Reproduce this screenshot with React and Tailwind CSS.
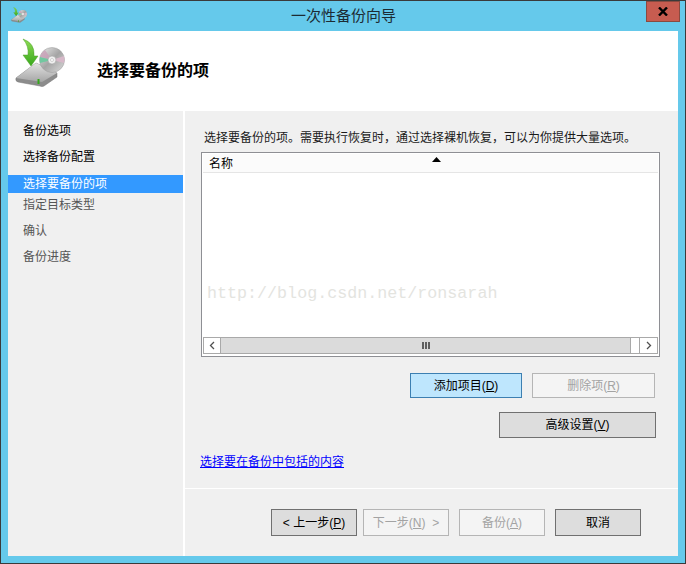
import React from 'react';

const FONT = "font-['Liberation_Sans','Noto_Sans_CJK_SC',sans-serif]";

const BackupIcon = ({ size }) => (
  <svg width={size} height={size} viewBox="0 0 56 56">
    <defs>
      <linearGradient id={`disc${size}`} x1="0" y1="0" x2="1" y2="1">
        <stop offset="0" stopColor="#ececec" />
        <stop offset="0.5" stopColor="#a4a4a4" />
        <stop offset="1" stopColor="#dcdcdc" />
      </linearGradient>
      <linearGradient id={`drive${size}`} x1="0" y1="0" x2="0" y2="1">
        <stop offset="0" stopColor="#e2e2e2" />
        <stop offset="1" stopColor="#a6a6a6" />
      </linearGradient>
      <linearGradient id={`arrow${size}`} x1="0" y1="0" x2="0" y2="1">
        <stop offset="0" stopColor="#8fdc55" />
        <stop offset="1" stopColor="#38a81c" />
      </linearGradient>
    </defs>
    {/* drive */}
    <path d="M4 40 L24 25 L45 35 L45 39 L32 48 Q30 49 28 48 L6 44 Q3 43 4 40Z" fill="#8c8c8c" stroke="#777" strokeWidth="0.5" />
    <path d="M4 40 L24 25 L45 35 L30 44Z" fill={`url(#drive${size})`} />
    <rect x="25.5" y="41" width="2" height="5" fill="#36a81c" />
    {/* disc */}
    <circle cx="40" cy="22" r="12.5" fill={`url(#disc${size})`} stroke="#999" strokeWidth="0.5" />
    <path d="M40 22 L28 19 A12 12 0 0 1 33 12Z" fill="#c9a0b8" opacity="0.8" />
    <path d="M40 22 L28 25 A12 12 0 0 1 28 19Z" fill="#72c8a0" />
    <path d="M40 22 L52 25 A12 12 0 0 0 52 18Z" fill="#d6b8c8" />
    <circle cx="40" cy="22" r="4" fill="#efefef" stroke="#999" strokeWidth="0.5" />
    <circle cx="40" cy="22" r="1.5" fill="#fff" stroke="#aaa" strokeWidth="0.5" />
    {/* arrow */}
    <path d="M11 1 Q23 5 22 18 L26 18 L19 28 L11 17 L16 17 Q17 8 11 1Z" fill={`url(#arrow${size})`} stroke="#4d9e2a" strokeWidth="0.5" />
  </svg>
);

const ScrollArrow = ({ d }) => (
  <svg width="7" height="9" viewBox="0 0 7 9" fill="none" stroke="#505050" strokeWidth="1.3">
    <path d={d} />
  </svg>
);

const Button = ({ children, className = '', disabled }) => (
  <div
    className={`flex items-center justify-center border text-[12px] ${
      disabled ? 'border-[#b5b5b5] bg-[#f4f4f4] text-[#a3a3a3]' : 'border-[#707070] bg-[#dddddd] text-black'
    } ${className}`}
  >
    {children}
  </div>
);

const steps = [
  { label: '备份选项', cls: 'h-[26px] text-black' },
  { label: '选择备份配置', cls: 'mb-[5px] h-[26px] text-black' },
  { label: '选择要备份的项', cls: 'h-[18px] bg-[#3399ff] text-white' },
  { label: '指定目标类型', cls: 'mb-[1px] h-[24px] text-[#555555]' },
  { label: '确认', cls: 'h-[26px] text-[#555555]' },
  { label: '备份进度', cls: 'h-[26px] text-[#555555]' },
];

export default function App() {
  return (
    <div className={`${FONT} flex h-[564px] w-[686px] flex-col border border-[#3a3a3a] bg-[#65c9eb]`}>
      {/* Title bar */}
      <div className="flex h-[30px] shrink-0 items-start">
        <div className="ml-[9px] mt-[6px] w-[18px]">
          <BackupIcon size={18} />
        </div>
        <div className="mt-[3px] flex-1 pl-[13px] text-center text-[15px] leading-[24px] text-[#1c2b33]">一次性备份向导</div>
        <div className="mr-[5px] flex h-[21px] w-[34px] items-center justify-center border border-[#8a4a40] bg-[#c75c50]">
          <svg width="10" height="9" viewBox="0 0 10 9" stroke="#000" strokeWidth="2.4">
            <path d="M1 0.5 L9 8.5 M9 0.5 L1 8.5" />
          </svg>
        </div>
      </div>

      <div className="mx-[7px] flex h-[525px] w-[670px] flex-col bg-white">
        {/* Header */}
        <div className="flex h-[80px] shrink-0 items-start">
          <div className="ml-[4px] mt-[7px]">
            <BackupIcon size={56} />
          </div>
          <div className="ml-[29px] mt-[28px] text-[16px] font-bold leading-[24px] text-black">选择要备份的项</div>
        </div>

        <div className="flex flex-1">
          {/* Step list */}
          <div className="w-[175px] bg-[#f0f0f0] pt-[7px]">
            {steps.map((s) => (
              <div key={s.label} className={`flex items-center pl-[15px] text-[12px] ${s.cls}`}>
                {s.label}
              </div>
            ))}
          </div>

          <div className="ml-[2px] flex flex-1 flex-col bg-[#f0f0f0]">
            <div className="h-[377px] px-[16px] pt-[18px]">
              <div className="pl-[3px] text-[12px] leading-[18px] text-[#1a1a1a]">
                选择要备份的项。需要执行恢复时，通过选择裸机恢复，可以为你提供大量选项。
              </div>

              {/* List */}
              <div className="relative mt-[5px] flex h-[205px] w-[459px] flex-col border border-[#8e8f94] bg-white p-[1px] pb-[2px]">
                <div className="relative flex h-[19px] items-center border-b border-[#e5e5e5] bg-[#fbfbfb] pl-[6px] pt-[2px] text-[12px] text-black">
                  名称
                  <svg className="absolute left-[229px] top-[3px]" width="9" height="5" viewBox="0 0 9 5">
                    <path d="M4.5 0 L9 5 L0 5Z" fill="#000" />
                  </svg>
                </div>
                <div className="flex-1" />
                <div className="flex h-[17px] border border-[#a9a9a9] bg-[#dbdbdb]">
                  <div className="flex w-[17px] items-center justify-center border-r border-[#a9a9a9] bg-white">
                    <ScrollArrow d="M5 1 L1.5 4.5 L5 8" />
                  </div>
                  <div className="flex flex-1 items-center justify-center">
                    <div className="h-[7px] w-[8px] border-x-2 border-[#606060] bg-[linear-gradient(90deg,transparent_33%,#606060_33%,#606060_66%,transparent_66%)]" />
                  </div>
                  <div className="w-[9px] border-l border-[#a9a9a9] bg-white" />
                  <div className="flex w-[18px] items-center justify-center border-l border-[#a9a9a9] bg-white">
                    <ScrollArrow d="M2 1 L5.5 4.5 L2 8" />
                  </div>
                </div>
                {/* Watermark */}
                <div className="absolute left-[5px] top-[131px] font-['Liberation_Mono',monospace] text-[16.7px] leading-[20px] whitespace-nowrap text-[#e4e4df]">
                  http://blog.csdn.net/ronsarah
                </div>
              </div>

              <div className="mt-[16px] flex justify-end gap-[10px] pr-[7px]">
                <Button className="h-[25px] w-[112px] border-[#3c7fb1]! bg-[#bee6fd]!">
                  添加项目(<span className="underline">D</span>)
                </Button>
                <Button disabled className="h-[25px] w-[123px]">
                  删除项(<span className="underline">R</span>)
                </Button>
              </div>
              <div className="mt-[14px] flex justify-end pr-[6px]">
                <Button className="h-[26px] w-[157px]">
                  高级设置(<span className="underline">V</span>)
                </Button>
              </div>
              <div className="-ml-[1px] mt-[15px] text-[12px] leading-[18px] text-[#0000ff] underline">选择要在备份中包括的内容</div>
            </div>

            {/* Footer */}
            <div className="flex flex-1 justify-end gap-[6px] border-t border-white pr-[37px] pt-[20px]">
              <Button className="h-[27px] w-[86px]">
                &lt;&nbsp;上一步(<span className="underline">P</span>)
              </Button>
              <Button disabled className="h-[27px] w-[86px]">
                下一步(<span className="underline">N</span>)&nbsp;&nbsp;&gt;
              </Button>
              <Button disabled className="ml-[4px] h-[27px] w-[86px]">
                备份(<span className="underline">A</span>)
              </Button>
              <Button className="ml-[4px] h-[27px] w-[86px]">取消</Button>
            </div>
          </div>
        </div>
      </div>
    </div>
  );
}
